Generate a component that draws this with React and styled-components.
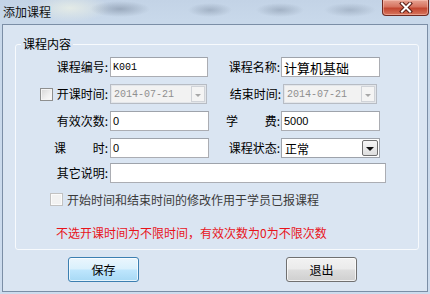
import React from 'react';
import styled, { createGlobalStyle } from 'styled-components';

const GlobalStyle = createGlobalStyle`
  html, body {
    margin: 0;
    padding: 0;
  }
  body {
    width: 430px;
    height: 294px;
    overflow: hidden;
    font-family: "Noto Sans CJK SC", "Noto Sans", sans-serif;
    font-size: 12px;
    color: #000;
  }
`;

const Window = styled.div`
  width: 430px;
  height: 294px;
  box-sizing: border-box;
  padding: 0 2px 2px 2px;
  display: flex;
  flex-direction: column;
  background:
    radial-gradient(ellipse 30px 8px at 120px 9px, rgba(120, 135, 155, 0.55), transparent),
    radial-gradient(ellipse 22px 7px at 210px 10px, rgba(120, 135, 155, 0.45), transparent),
    radial-gradient(ellipse 24px 7px at 280px 10px, rgba(120, 135, 155, 0.45), transparent),
    radial-gradient(ellipse 26px 7px at 350px 10px, rgba(120, 135, 155, 0.4), transparent),
    radial-gradient(ellipse 40px 14px at 70px 8px, rgba(235, 240, 230, 0.8), transparent),
    linear-gradient(180deg, #c3d3e6 0px, #c8d8ea 20px, #cddcee 100%);
`;

const TitleBar = styled.div`
  height: 24px;
  flex: none;
  display: flex;
  align-items: flex-start;
  justify-content: space-between;
`;

const Title = styled.span`
  margin: 4px 0 0 1px;
  line-height: 16px;
  color: #111;
`;

const CloseButton = styled.div`
  width: 47px;
  height: 16px;
  box-sizing: border-box;
  margin-right: -1px;
  border: 1px solid #6e2a22;
  border-top: none;
  border-radius: 0 0 4px 4px;
  background: linear-gradient(180deg, #e7a393 0%, #d6735f 45%, #c24630 55%, #d8755d 100%);
  box-shadow: inset 0 0 0 1px rgba(255, 210, 200, 0.45);
  display: flex;
  align-items: center;
  justify-content: center;
`;

const Client = styled.div`
  flex: 1;
  border: 1px solid #7b8ea6;
  background: #dae5f2;
  display: flex;
  flex-direction: column;
`;

const Group = styled.fieldset`
  margin: 12px 8px 0 12px;
  padding: 6px 0 0 0;
  height: 213px;
  box-sizing: border-box;
  border: 1px solid #f7fafd;
  border-radius: 3px;
  min-width: 0;
`;

const Legend = styled.legend`
  margin-left: 5px;
  padding: 0 2px;
  line-height: 14px;
`;

const Row = styled.div`
  display: flex;
  align-items: center;
  height: ${(p) => p.$h || 20}px;
  margin-bottom: ${(p) => p.$gap || 7}px;
`;

const Cell = styled.div`
  flex: none;
  width: ${(p) => p.$w}px;
  box-sizing: border-box;
  padding-right: ${(p) => p.$pr || 0}px;
  display: flex;
  align-items: center;
  justify-content: flex-end;
`;

const Label = styled.span`
  white-space: nowrap;
  line-height: 16px;
  ${(p) =>
    p.$spread &&
    `
    width: 54px;
    display: flex;
    justify-content: space-between;
  `}
`;

const TextBox = styled.div`
  flex: none;
  width: ${(p) => p.$w}px;
  height: ${(p) => p.$h || 20}px;
  box-sizing: border-box;
  border: 1px solid #abadb3;
  border-top-color: #9ea3ab;
  background: #fff;
  padding-left: 2px;
  display: flex;
  align-items: center;
  font-family: ${(p) => (p.$mono ? '"Liberation Mono", monospace' : p.$cjk ? '"Noto Sans CJK SC", sans-serif' : '"Liberation Sans", sans-serif')};
  font-size: ${(p) => (p.$mono ? 10 : p.$cjk ? 13 : 11)}px;
`;

const DateBox = styled.div`
  flex: none;
  width: ${(p) => p.$w}px;
  height: 20px;
  box-sizing: border-box;
  border: 1px solid #b7bcc4;
  box-shadow: inset 0 0 0 1px #e3e6ea;
  background: #f2f2f2;
  display: flex;
  align-items: stretch;
  font-family: "Liberation Mono", monospace;
  font-size: 10px;
  color: #8f8f8f;
`;

const DateText = styled.span`
  flex: 1;
  display: flex;
  align-items: center;
  padding-left: 3px;
`;

const DropButton = styled.div`
  flex: none;
  width: ${(p) => (p.$enabled ? 16 : 14)}px;
  margin: ${(p) => (p.$enabled ? '1px' : '1px 1px 1px 0')};
  box-sizing: border-box;
  border: 1px solid ${(p) => (p.$enabled ? '#6f6f6f' : '#d0d3d8')};
  border-radius: ${(p) => (p.$enabled ? 2 : 0)}px;
  background: ${(p) => (p.$enabled ? 'linear-gradient(180deg, #f6f6f6, #dedede)' : '#f4f4f4')};
  display: flex;
  align-items: center;
  justify-content: center;
`;

const Arrow = styled.span`
  width: 0;
  height: 0;
  margin-top: 2px;
  border-left: ${(p) => (p.$dark ? 4 : 3)}px solid transparent;
  border-right: ${(p) => (p.$dark ? 4 : 3)}px solid transparent;
  border-top: ${(p) => (p.$dark ? 4 : 3)}px solid ${(p) => (p.$dark ? '#111' : '#a8a8a8')};
`;

const SelectBox = styled.div`
  flex: none;
  width: ${(p) => p.$w}px;
  height: 20px;
  box-sizing: border-box;
  border: 1px solid #9ea3ab;
  background: #fff;
  display: flex;
  align-items: stretch;
`;

const SelectText = styled.span`
  flex: 1;
  display: flex;
  align-items: center;
  padding-left: 3px;
  font-size: 12px;
`;

const Check = styled.span`
  flex: none;
  width: 13px;
  height: 13px;
  box-sizing: border-box;
  margin-right: ${(p) => p.$mr || 4}px;
  border: 1px solid ${(p) => (p.$disabled ? '#c2c2c2' : '#8e8f8f')};
  background: ${(p) =>
    p.$disabled
      ? '#f2f2f2'
      : 'linear-gradient(135deg, #d6d6d6 0%, #f0f0f0 60%, #fafafa 100%)'};
  box-shadow: inset 0 0 0 1px ${(p) => (p.$disabled ? '#fbfbfb' : '#f4f4f4')};
`;

const OptionRow = styled.div`
  display: flex;
  align-items: center;
  height: 18px;
  padding-left: 34px;
  margin-top: 2px;
  color: #3a3a3a;
`;

const Note = styled.div`
  margin-top: 17px;
  padding-left: 40px;
  line-height: 16px;
  color: #e8141b;
`;

const ButtonBar = styled.div`
  display: flex;
  margin-top: 7px;
  padding-left: 65px;
  gap: 147px;
`;

const Button = styled.div`
  width: 71px;
  height: 25px;
  box-sizing: border-box;
  border: 1px solid ${(p) => (p.$primary ? '#3c7fb1' : '#707070')};
  border-radius: 3px;
  background: ${(p) =>
    p.$primary
      ? 'linear-gradient(180deg, #eaf6fd 0%, #d9f0fc 48%, #bee6fd 52%, #a7d9f5 100%)'
      : 'linear-gradient(180deg, #f2f2f2 0%, #ebebeb 48%, #dddddd 52%, #cfcfcf 100%)'};
  box-shadow: inset 0 0 0 1px rgba(255, 255, 255, 0.7);
  display: flex;
  align-items: center;
  justify-content: center;
  font-size: 12px;
`;

const App = () => (
  <>
    <GlobalStyle />
    <Window>
      <TitleBar>
        <Title>添加课程</Title>
        <CloseButton>
          <svg width="14" height="11" viewBox="0 0 14 11">
            <path d="M3 1.5 L11 9.5 M11 1.5 L3 9.5" stroke="#5a1d15" strokeWidth="4" strokeLinecap="square" />
            <path d="M3 1.5 L11 9.5 M11 1.5 L3 9.5" stroke="#fff" strokeWidth="2" strokeLinecap="square" />
          </svg>
        </CloseButton>
      </TitleBar>

      <Client>
        <Group>
          <Legend>课程内容</Legend>

          <Row>
            <Cell $w={94} $pr={2}>
              <Label>课程编号:</Label>
            </Cell>
            <TextBox $w={98} $mono>K001</TextBox>
            <Cell $w={73} $pr={1}>
              <Label>课程名称:</Label>
            </Cell>
            <TextBox $w={99} $cjk>计算机基础</TextBox>
          </Row>

          <Row>
            <Cell $w={94} $pr={2}>
              <Check />
              <Label>开课时间:</Label>
            </Cell>
            <DateBox $w={97}>
              <DateText>2014-07-21</DateText>
              <DropButton>
                <Arrow />
              </DropButton>
            </DateBox>
            <Cell $w={76} $pr={2}>
              <Label>结束时间:</Label>
            </Cell>
            <DateBox $w={94}>
              <DateText>2014-07-21</DateText>
              <DropButton>
                <Arrow />
              </DropButton>
            </DateBox>
          </Row>

          <Row>
            <Cell $w={94} $pr={2}>
              <Label>有效次数:</Label>
            </Cell>
            <TextBox $w={99}>0</TextBox>
            <Cell $w={72} $pr={1}>
              <Label $spread>
                <span>学</span>
                <span>费:</span>
              </Label>
            </Cell>
            <TextBox $w={99}>5000</TextBox>
          </Row>

          <Row $gap={5}>
            <Cell $w={94} $pr={2}>
              <Label $spread>
                <span>课</span>
                <span>时:</span>
              </Label>
            </Cell>
            <TextBox $w={99}>0</TextBox>
            <Cell $w={72} $pr={1}>
              <Label>课程状态:</Label>
            </Cell>
            <SelectBox $w={99}>
              <SelectText>正常</SelectText>
              <DropButton $enabled>
                <Arrow $dark />
              </DropButton>
            </SelectBox>
          </Row>

          <Row $gap={0}>
            <Cell $w={94} $pr={2}>
              <Label>其它说明:</Label>
            </Cell>
            <TextBox $w={276} />
          </Row>

          <OptionRow>
            <Check $disabled />
            <span>开始时间和结束时间的修改作用于学员已报课程</span>
          </OptionRow>

          <Note>不选开课时间为不限时间，有效次数为0为不限次数</Note>
        </Group>

        <ButtonBar>
          <Button $primary>保存</Button>
          <Button>退出</Button>
        </ButtonBar>
      </Client>
    </Window>
  </>
);

export default App;
